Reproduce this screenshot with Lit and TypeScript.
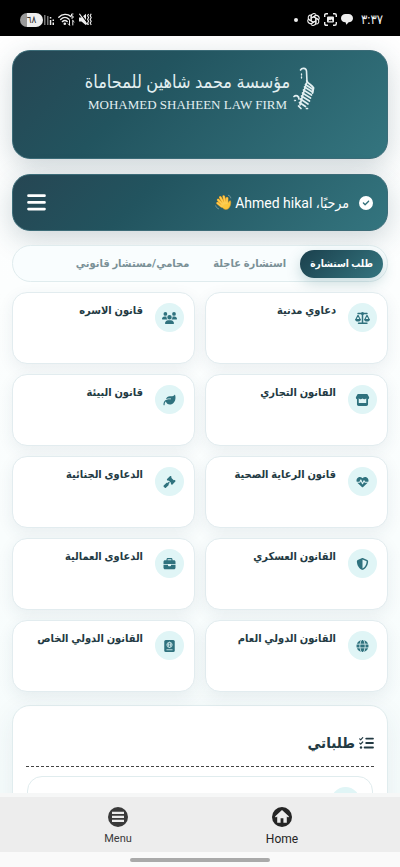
import { LitElement, html, css, svg } from "lit";
import { customElement, property, state } from "lit/decorators.js";
import { classMap } from "lit/directives/class-map.js";

const glyphs: Record<string, { box: string; body: unknown }> = {
  check: {
    box: "0 0 512 512",
    body: svg`<path d="M256 512A256 256 0 1 0 256 0a256 256 0 1 0 0 512zM369 209L241 337c-9.4 9.4-24.6 9.4-33.9 0l-64-64c-9.4-9.4-9.4-24.6 0-33.9s24.6-9.4 33.9 0l47 47L335 175c9.4-9.4 24.6-9.4 33.9 0s9.4 24.6 0 33.9z"/>`,
  },
  bars: {
    box: "0 0 19 17",
    body: svg`<path d="M1.5 1.7h16M1.5 8.4h16M1.5 15.1h16" stroke="currentColor" stroke-width="2.7" stroke-linecap="round"/>`,
  },
  scale: {
    box: "0 0 640 512",
    body: svg`<g fill="none" stroke="currentColor" stroke-width="64" stroke-linecap="round" stroke-linejoin="round"><path d="M130 64H510M320 70V480M150 480H510"/><path stroke-width="48" d="M128 140L36 320H220ZM512 140L420 320H604Z"/></g><circle cx="320" cy="66" r="64"/><path d="M0 312H256C250 372 196 410 128 410S6 372 0 312zM384 312H640C634 372 580 410 512 410S390 372 384 312z"/>`,
  },
  users: {
    box: "0 0 640 512",
    body: svg`<path d="M144 0a80 80 0 1 1 0 160A80 80 0 1 1 144 0zM512 0a80 80 0 1 1 0 160A80 80 0 1 1 512 0zM0 298.7C0 239.8 47.8 192 106.7 192h42.7c15.9 0 31 3.5 44.6 9.7c-1.3 7.2-1.9 14.7-1.9 22.3c0 38.2 16.8 72.5 43.3 96H21.3C9.6 320 0 310.4 0 298.7zM404.6 320c26.6-23.5 43.3-57.8 43.3-96c0-7.6-.7-15-1.9-22.3c13.6-6.3 28.7-9.7 44.6-9.7h42.7C592.2 192 640 239.8 640 298.7c0 11.8-9.6 21.3-21.3 21.3H405.3zM224 224a96 96 0 1 1 192 0 96 96 0 1 1 -192 0zM128 485.3C128 411.7 187.7 352 261.3 352H378.7C452.3 352 512 411.7 512 485.3c0 14.7-11.9 26.7-26.7 26.7H154.7c-14.7 0-26.7-11.9-26.7-26.7z"/>`,
  },
  store: {
    box: "0 0 576 512",
    body: svg`<path d="M104 0H472c14 0 26 6 33 18l56 96c26 46 4 100-44 108c-32 5-58-8-76-30c-34 40-106 40-153 0c-47 40-119 40-153 0c-18 22-44 35-76 30C11 214-11 160 15 114L71 18C78 6 90 0 104 0z"/><path d="M52 200h76V380H448V200h76V440c0 40-32 72-72 72H124c-40 0-72-32-72-72z"/>`,
  },
  leaf: {
    box: "0 0 512 512",
    body: svg`<path d="M272 96c-78.6 0-145.1 51.5-167.7 122.5c33.6-17 71.5-26.5 111.7-26.5h88c8.8 0 16 7.2 16 16s-7.2 16-16 16H288 216c-16.6 0-32.7 1.9-48.3 5.4c-25.9 5.9-49.9 16.4-71.4 30.7C38.3 298.8 0 364.9 0 440v16c0 13.3 10.7 24 24 24s24-10.7 24-24V440c0-48.7 20.7-92.5 53.8-123.2C121.6 392.3 190.3 448 272 448l1 0c132.1-.7 239-130.9 239-291.4c0-42.6-7.5-83.1-21.1-119.6c-2.6-6.9-12.7-6.6-16.2-.1C455.9 72.1 418.7 96 376 96L272 96z"/>`,
  },
  heart: {
    box: "0 0 512 512",
    body: svg`<path d="M228.3 469.1L47.6 300.4c-4.2-3.9-8.2-8.1-11.9-12.4h87c22.6 0 43-13.6 51.7-34.5l10.5-25.2 49.3 109.5c3.8 8.5 12.1 14 21.4 14.1s17.8-5 22-13.3L320 253.7l1.7 3.4c9.5 19 28.9 31 50.1 31H476.3c-3.7 4.3-7.7 8.5-11.9 12.4L283.7 469.1c-7.5 7-17.4 10.9-27.7 10.9s-20.2-3.9-27.7-10.9zM503.7 240h-132c-3 0-5.8-1.7-7.2-4.4l-23.2-46.3c-4.1-8.1-12.4-13.3-21.5-13.3s-17.4 5.1-21.5 13.3l-41.4 82.8L205.9 158.2c-3.9-8.7-12.7-14.3-22.2-14.1s-18.1 5.9-21.8 14.8l-31.8 76.3c-1.2 3-4.2 4.9-7.4 4.9H16c-2.6 0-5 .4-7.3 1.1C3 225.2 0 208.2 0 190.9v-5.8c0-69.9 50.5-129.5 119.4-141C165 36.5 211.4 51.4 244 84l12 12 12-12c32.6-32.6 79-47.5 124.6-39.9C461.5 55.6 512 115.2 512 185.1v5.8c0 16.9-2.8 33.5-8.3 49.1z"/>`,
  },
  gavel: {
    box: "0 0 512 512",
    body: svg`<path d="M318.6 9.4c-12.5-12.5-32.8-12.5-45.3 0l-120 120c-12.5 12.5-12.5 32.8 0 45.3l16 16c12.5 12.5 32.8 12.5 45.3 0l4-4L325.4 293.4l-4 4c-12.5 12.5-12.5 32.8 0 45.3l16 16c12.5 12.5 32.8 12.5 45.3 0l120-120c12.5-12.5 12.5-32.8 0-45.3l-16-16c-12.5-12.5-32.8-12.5-45.3 0l-4 4L330.6 74.6l4-4c12.5-12.5 12.5-32.8 0-45.3l-16-16zm-152 288c-12.5-12.5-32.8-12.5-45.3 0l-112 112c-12.5 12.5-12.5 32.8 0 45.3l48 48c12.5 12.5 32.8 12.5 45.3 0l112-112c12.5-12.5 12.5-32.8 0-45.3l-1.4-1.4L272 285.3 226.7 240 168 298.7l-1.4-1.4z"/>`,
  },
  shield: {
    box: "0 0 512 512",
    body: svg`<path d="M256 0c4.6 0 9.2 1 13.4 2.9L457.7 82.8c22 9.3 38.4 31 38.3 57.2c-.5 99.2-41.3 280.7-213.6 363.2c-16.7 8-36.1 8-52.8 0C57.3 420.7 16.5 239.2 16 140c-.1-26.2 16.3-47.9 38.3-57.2L242.7 2.9C246.8 1 251.4 0 256 0zm0 66.8V444.8C394 378 431.1 230.1 432 141.4L256 66.8z"/>`,
  },
  briefcase: {
    box: "0 0 512 512",
    body: svg`<path d="M184 48H328c4.4 0 8 3.6 8 8V96H176V56c0-4.4 3.6-8 8-8zm-56 8V96H64C28.7 96 0 124.7 0 160v96H512V160c0-35.3-28.7-64-64-64H384V56c0-30.9-25.1-56-56-56H184c-30.9 0-56 25.1-56 56zM512 288H320v32c0 17.7-14.3 32-32 32H224c-17.7 0-32-14.3-32-32V288H0V416c0 35.3 28.7 64 64 64H448c35.3 0 64-28.7 64-64V288z"/>`,
  },
  globe: {
    box: "0 0 512 512",
    body: svg`<path d="M352 256c0 22.2-1.2 43.6-3.3 64H163.3c-2.2-20.4-3.3-41.8-3.3-64s1.2-43.6 3.3-64H348.7c2.2 20.4 3.3 41.8 3.3 64zm28.8-64H503.9c5.3 20.5 8.1 41.9 8.1 64s-2.8 43.5-8.1 64H380.8c2.1-20.6 3.2-42 3.2-64s-1.1-43.4-3.2-64zm112.6-32H376.7c-10-63.9-29.8-117.4-55.3-151.6c78.3 20.7 142 77.5 171.9 151.6zm-149.1 0H167.7c6.1-36.4 15.5-68.6 27-94.7c10.5-23.6 22.2-40.7 33.5-51.5C239.4 3.2 248.7 0 256 0s16.6 3.2 27.8 13.8c11.3 10.8 23 27.9 33.5 51.5c11.6 26 20.9 58.2 27 94.7zm-209 0H18.6C48.6 85.9 112.2 29.1 190.6 8.4C165.1 42.6 145.3 96.1 135.3 160zM8.1 192H131.2c-2.1 20.6-3.2 42-3.2 64s1.1 43.4 3.2 64H8.1C2.8 299.5 0 278.1 0 256s2.8-43.5 8.1-64zM194.7 446.6c-11.6-26-20.9-58.2-27-94.6H344.3c-6.1 36.4-15.5 68.6-27 94.6c-10.5 23.6-22.2 40.7-33.5 51.5C272.6 508.8 263.3 512 256 512s-16.6-3.2-27.8-13.8c-11.3-10.8-23-27.9-33.5-51.5zM135.3 352c10 63.9 29.8 117.4 55.3 151.6C112.2 482.9 48.6 426.1 18.6 352H135.3zm358.1 0c-30 74.1-93.6 130.9-171.9 151.6c25.5-34.2 45.2-87.7 55.3-151.6H493.4z"/>`,
  },
  passport: {
    box: "0 0 448 512",
    body: svg`<rect width="448" height="512" rx="64"/><g fill="none" stroke="#e0f5f6"><circle cx="224" cy="208" r="112" stroke-width="32"/><ellipse cx="224" cy="208" rx="46" ry="112" stroke-width="28"/><path d="M112 208H336" stroke-width="30"/><path d="M112 416H336" stroke-width="34" stroke-linecap="round"/></g>`,
  },
  tasks: {
    box: "0 0 15 12",
    body: svg`<g fill="none" stroke="currentColor" stroke-linecap="round" stroke-linejoin="round"><path stroke-width="1.8" d="M7.2 1.6h6.8M7.2 6h6.8M5.6 10.5h8.4"/><path stroke-width="1.2" d="M.7 1.8l1 1L3.7.7M.7 6.1l1 1 2-2.1"/></g><circle cx="2" cy="10.5" r="1.2"/>`,
  },
  menuDisc: {
    box: "0 0 20 20",
    body: svg`<circle cx="10" cy="10" r="10"/><path d="M4 5.8h12M4 9.8h12M4 13.8h12" stroke="#ededed" stroke-width="2.3"/>`,
  },
  homeDisc: {
    box: "0 0 20 20",
    body: svg`<circle cx="10" cy="10" r="10"/><path fill="#ededed" d="M10 3L3 9.600l.9 1L5.200 9.600V15.800H8.600V11.300H11.400V15.800H14.800V9.600L16.100 10.600L17 9.600z"/>`,
  },
  wave: {
    box: "0 0 18 18",
    body: svg`<g fill="none" stroke-linecap="round"><g stroke="#e79b1f" stroke-width="2.800"><path d="M7.800 11L3.300 6.300M9 9.300L5.600 3.500M11 8.500L9.200 2.700M12.700 9L12.800 4.500M6.500 12.800L2.700 9.600"/></g><path d="M6 11.500C7.500 8 13 7 14 9C15 8.500 15 6.600 16.300 7.200C17.300 8.500 16.500 14 13.700 15.800C10.500 17.300 7.500 15.500 6 11.500z" fill="#fcc63c" stroke="#e79b1f" stroke-width=".6"/><g stroke="#fdcd52" stroke-width="1.800"><path d="M8.400 11.500L3.300 6.300M9.500 10.500L5.600 3.500M11 10L9.200 2.700M12.600 10L12.800 4.500M7.500 13.300L2.700 9.600"/></g><path stroke="#8fa9ad" stroke-width=".8" d="M.8 12.500c.4 1.600 1.500 2.700 3 3.200M14.200 1.400c1.400.4 2.200 1.300 2.500 2.700"/></g>`,
  },
  mute: {
    box: "0 0 13 13",
    body: svg`<path d="M0 4.500H2.500L7 .8V12.200L2.500 8.600H0z"/><path d="M1.400.6L9 10.600" stroke="#000" stroke-width="1.200"/><path d="M.4.8L8.400 11.800M9.600 1l-1 1.800 1 1.800-1 1.900 1 1.800-1 1.800 1 1.700M12.200.8l-1 2 1 1.800-1 1.900 1 1.800-1 1.800 1 1.900" fill="none" stroke="currentColor" stroke-width="1.100"/>`,
  },
  wifi: {
    box: "0 0 17 13",
    body: svg`<g fill="none" stroke="currentColor" stroke-width="1.400" stroke-linecap="round"><path d="M.8 4.200C4.400.6 9.600.6 12.800 3.400M2.600 6.400C5.200 4 8.600 4 11 6.200M4.400 8.600C6 7.300 7.800 7.300 9.200 8.600"/><path stroke-width="1" d="M15 1h-1.500v2H15v2h-1.500M11.500 7.500v4.500M10.200 10.800l1.300 1.300M14.800 12V7.500M14.800 7.500l1.300 1.300"/></g><circle cx="6.800" cy="10.800" r="1.300"/>`,
  },
  signal: {
    box: "0 0 10 11",
    body: svg`<path d="M0 1h1.500v10H0zM3 2h1.500v9H3z" opacity=".5"/><path d="M5.800 3h1.500v1.500H5.800zM5.800 6h1.500v5H5.800zM8.500 8.500H10V11H8.500zM8.500 5.500H10V7H8.500z"/>`,
  },
  chat: {
    box: "0 0 12 11",
    body: svg`<path d="M4.500 0h3c2.500 0 4.500 1.800 4.500 4.200S10 8.300 7.600 8.300L5.400 10.800 4.500 8.300C2 8.300 0 6.600 0 4.200S2 0 4.500 0z"/>`,
  },
  capture: {
    box: "0 0 13 13",
    body: svg`<path d="M.7 4V2.200Q.7.7 2.200.7H4M9 .7h1.800q1.500 0 1.500 1.500V4M12.300 9v1.800q0 1.500-1.500 1.500H9M4 12.300H2.200Q.7 12.300.7 10.800V9" fill="none" stroke="currentColor" stroke-width="1.400"/><path d="M4 3.500h5a1 1 0 0 1 1 1v4a1 1 0 0 1-1 1H4a1 1 0 0 1-1-1v-4a1 1 0 0 1 1-1zM4.300 8.300h4.500L7.300 6.200 6.200 7.400 5.500 6.800z" fill-rule="evenodd"/>`,
  },
  knot: {
    box: "1 1 22 22",
    body: svg`<g fill="none" stroke="currentColor" stroke-width="1.900">${[0, 60, 120, 180, 240, 300].map(
      (a) => svg`<path transform=${`rotate(${a} 12 12)`} d="M8 14.300V6.300A4.600 4.600 0 0 1 16.400 4M8 9.700L14.800 5.800A4.600 4.600 0 0 1 17.500 5.200"/>`
    )}</g>`,
  },
  emblem: {
    box: "0 0 22 44",
    body: svg`<g fill="none" stroke="currentColor" stroke-linecap="round"><path stroke-width="1.600" d="M7.500 3C9 .5 13 .8 13.500 4L14 15"/><path stroke-width="1.300" d="M8.500 7v1M8.500 10v1"/><path stroke-width="1.900" d="M13.800 14C15 17 19 18 20.500 21L19.500 26"/><path stroke-width="1.700" d="M12.500 17.500L20 22.500M11.500 20L19.500 25M10.500 23L18.500 28M9.500 26L17.500 31M8.500 29L16.500 34M7.500 32L15 37M6.500 35.500L12.500 39.500M5.500 39L8 41.500M13.500 41.500h1"/><path stroke-width="1.700" d="M13.500 16L9.500 29L7 38M1 29.500C3 27.500 6 29 6 32"/><circle cx="2" cy="33.500" r=".6"/></g>`,
  },
};

@customElement("app-icon")
class AppIcon extends LitElement {
  @property() name = "check";
  static styles = css`
    :host { display: inline-flex; flex: none; }
    .glyph { width: 100%; height: 100%; display: block; fill: currentColor; }
  `;
  render() {
    const g = glyphs[this.name];
    return html`<svg class="glyph" viewBox=${g.box} aria-hidden="true">${g.body}</svg>`;
  }
}

@customElement("status-bar")
class StatusBar extends LitElement {
  static styles = css`
    :host {
      display: flex; flex: none; align-items: center; justify-content: space-between;
      height: 36px; padding: 3px 17px 0 20px; box-sizing: border-box;
      background: #000; color: #eee; font-family: Roboto, "DejaVu Sans Condensed", "DejaVu Sans", sans-serif;
    }
    .group { display: flex; align-items: center; gap: 4px; }
    .battery {
      width: 23px; height: 14px; border-radius: 7px; color: #333; font-size: 10px; line-height: 14px;
      text-align: center; background: linear-gradient(90deg, #999 30%, #eee 30%);
    }
    .signal { width: 10px; height: 11px; margin-left: -3px; }
    .wifi { width: 17px; height: 13px; }
    .mute { width: 13px; height: 13px; }
    .dot { width: 4px; height: 4px; border-radius: 50%; background: #eee; margin-right: 5px; }
    .knot, .capture { width: 13px; height: 13px; }
    .chat { width: 12px; height: 11px; }
    .time { font-size: 13px; line-height: 18px; margin-left: 4px; }
  `;
  render() {
    return html`
      <div class="group">
        <span class="battery">٦٨</span>
        <app-icon class="signal" name="signal"></app-icon>
        <app-icon class="wifi" name="wifi"></app-icon>
        <app-icon class="mute" name="mute"></app-icon>
      </div>
      <div class="group">
        <span class="dot"></span>
        <app-icon class="knot" name="knot"></app-icon>
        <app-icon class="capture" name="capture"></app-icon>
        <app-icon class="chat" name="chat"></app-icon>
        <span class="time" dir="ltr">٣:٣٧</span>
      </div>
    `;
  }
}

const services = [
  ["scale", "دعاوي مدنية"],
  ["users", "قانون الاسره"],
  ["store", "القانون التجاري"],
  ["leaf", "قانون البيئة"],
  ["heart", "قانون الرعاية الصحية"],
  ["gavel", "الدعاوى الجنائية"],
  ["shield", "القانون العسكري"],
  ["briefcase", "الدعاوى العمالية"],
  ["globe", "القانون الدولي العام"],
  ["passport", "القانون الدولي الخاص"],
];
const tabs = ["طلب استشارة", "استشارة عاجلة", "محامي/مستشار قانوني"];

@customElement("app-root")
class AppRoot extends LitElement {
  @state() private tab = 0;

  static styles = css`
    :host {
      display: flex; flex-direction: column; height: 100vh; overflow: hidden;
      font-family: Roboto, "DejaVu Sans Condensed", "DejaVu Sans", sans-serif;
      color: #233a43; background: #fafafa;
    }
    button { font: inherit; border: 0; padding: 0; background: none; color: inherit; cursor: pointer; }
    .page {
      flex: 1; min-height: 0; overflow-y: auto; scrollbar-width: none; padding: 14px 12px;
      background: linear-gradient(180deg, #fff, #f6fcfc);
    }
    .brand, .welcome {
      border-radius: 18px; box-sizing: border-box; color: #fff; border: 1px solid #3c6c78;
      background: linear-gradient(135deg, #264653, #22545f 35%, #34757f);
      box-shadow: 0 8px 28px rgba(38, 70, 83, .22);
    }
    .brand {
      display: flex; justify-content: center; gap: 3px; height: 109px; padding: 16px 0 0;
      color: #e2eff1;
    }
    .emblem { width: 22px; height: 44px; }
    .words { display: flex; flex-direction: column; align-items: center; }
    .calligraphy { font-size: 18px; line-height: 30px; white-space: nowrap; }
    .latin { font: 400 13px/16px "Liberation Serif", serif; white-space: nowrap; }
    .welcome {
      display: flex; align-items: center; height: 57px; margin-top: 15px; padding: 0 14px;
    }
    .verified { width: 14px; height: 14px; margin-left: 10px; }
    .hello { font-size: 14px; line-height: 20px; font-weight: 400; margin: 0; }
    .wave { width: 17px; height: 17px; margin-right: 3px; }
    .burger { margin-right: auto; display: flex; }
    .burger app-icon { width: 19px; height: 17px; }
    .tabs {
      display: flex; align-items: center; gap: 4px; margin-top: 14px; height: 37px; box-sizing: border-box;
      padding: 0 4px; border: 1px solid #e0ecee; border-radius: 19px; background: #f9fdfe;
    }
    .tab {
      height: 28px; border-radius: 14px; padding: 0 10px; font-size: 11px;
      line-height: 16px; font-weight: 700; color: #7b9197; white-space: nowrap;
    }
    .tab.on {
      font-size: 10px; color: #fff; background: linear-gradient(135deg, #1b404d, #34757f);
      box-shadow: 0 5px 14px rgba(42, 110, 120, .25);
    }
    .grid {
      display: grid; grid-template-columns: repeat(2, minmax(0, 1fr)); gap: 10px; margin-top: 10px;
    }
    .card {
      display: flex; align-items: flex-start; gap: 12px; min-height: 72px; padding: 10px; text-align: right;
      background: #fff; border: 1px solid #e2ecef; border-radius: 15px; box-sizing: border-box;
      box-shadow: 0 5px 16px rgba(38, 70, 83, .08);
    }
    .disc {
      display: flex; align-items: center; justify-content: center; flex: none;
      width: 29px; height: 29px; border-radius: 50%; background: #e0f5f6; color: #2f727e;
    }
    .disc app-icon { width: 15px; height: 12px; }
    .title { font-size: 11px; line-height: 16px; font-weight: 700; white-space: nowrap; }
    .orders {
      margin-top: 13px; padding: 25px 13px 60px; border: 1px solid #e0ecee; border-radius: 18px;
      background: #fff; box-shadow: 0 8px 28px rgba(38, 70, 83, .08);
    }
    .heading {
      display: flex; align-items: center; gap: 4px; margin: 0; padding-bottom: 11px;
      font-size: 15px; line-height: 24px; font-weight: 700; border-bottom: 1px dashed #444;
    }
    .heading app-icon { width: 15px; height: 12px; }
    .order {
      display: flex; margin: 9px 1px 0; padding: 10px 12px; border: 1px solid #e0ecee;
      border-radius: 15px; min-height: 60px;
    }
    .nav {
      display: flex; flex: none; justify-content: center; height: 55px; background: #ededed;
      border-top: 4px solid #f6f7f7; color: #252525;
    }
    .item {
      display: flex; flex-direction: column; align-items: center; justify-content: center;
      gap: 4px; width: 41%; padding-top: 4px; font-size: 12px; line-height: 16px;
    }
    .item.idle { font-size: 11px; color: #3a3a3a; }
    .item app-icon { width: 20px; height: 20px; }
    .gesture { display: flex; flex: none; align-items: center; justify-content: center; height: 15px; }
    .handle { width: 35%; height: 4px; border-radius: 2px; background: #aaa; }
  `;

  render() {
    return html`
      <status-bar></status-bar>
      <main class="page" dir="rtl">
        <header class="brand">
          <app-icon class="emblem" name="emblem"></app-icon>
          <div class="words">
            <span class="calligraphy">مؤسسة محمد شاهين للمحاماة</span>
            <span class="latin" dir="ltr">MOHAMED SHAHEEN LAW FIRM</span>
          </div>
        </header>
        <section class="welcome">
          <app-icon class="verified" name="check"></app-icon>
          <p class="hello">مرحبًا، Ahmed hikal</p>
          <app-icon class="wave" name="wave"></app-icon>
          <button class="burger" aria-label="القائمة"><app-icon name="bars"></app-icon></button>
        </section>
        <div class="tabs" role="tablist">
          ${tabs.map(
            (t, i) => html`<button role="tab" aria-selected=${i === this.tab}
              class=${classMap({ tab: true, on: i === this.tab })} @click=${() => (this.tab = i)}>${t}</button>`
          )}
        </div>
        <div class="grid">
          ${services.map(
            ([icon, label]) => html`<button class="card">
              <span class="disc"><app-icon name=${icon}></app-icon></span>
              <span class="title">${label}</span>
            </button>`
          )}
        </div>
        <section class="orders">
          <h2 class="heading"><app-icon name="tasks"></app-icon>طلباتي</h2>
          <div class="order"><span class="disc"></span></div>
        </section>
      </main>
      <nav class="nav">
        <button class="item idle"><app-icon name="menuDisc"></app-icon>Menu</button>
        <button class="item"><app-icon name="homeDisc"></app-icon>Home</button>
      </nav>
      <div class="gesture"><span class="handle"></span></div>
    `;
  }
}
